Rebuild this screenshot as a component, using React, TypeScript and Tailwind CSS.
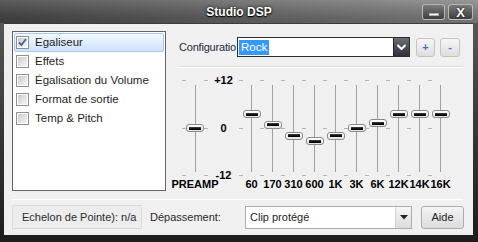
import React from 'react';

const bands = [
  { label: '60', value: 4 },
  { label: '170', value: 1 },
  { label: '310', value: -2.2 },
  { label: '600', value: -3.8 },
  { label: '1K', value: -2.2 },
  { label: '3K', value: 0 },
  { label: '6K', value: 1.4 },
  { label: '12K', value: 4 },
  { label: '14K', value: 4 },
  { label: '16K', value: 4 },
];

const items = ['Egaliseur', 'Effets', 'Égalisation du Volume', 'Format de sortie', 'Temp & Pitch'];

const Checkbox: React.FC<{ checked?: boolean }> = ({ checked }) => (
  <div className="w-[13px] h-[13px] border border-[#8e8f8f] bg-white p-px shrink-0">
    <div className="w-full h-full bg-gradient-to-br from-[#cbcbcb] to-[#f6f6f6] flex items-center justify-center">
      {checked && (
        <svg width="9" height="9" viewBox="0 0 9 9">
          <path d="M1 4.5 L3.5 7 L8 1" stroke="#4a5f97" strokeWidth="1.8" fill="none" />
        </svg>
      )}
    </div>
  </div>
);

const Tick: React.FC<{ pos: 'top' | 'mid' | 'bot'; side: 'left' | 'right' }> = ({ pos, side }) => {
  const y = pos === 'top' ? 'top-[5px]' : pos === 'mid' ? 'top-[53px]' : 'top-[100px]';
  const x = side === 'left' ? '-left-[2px]' : '-right-[2px]';
  return <span className={`absolute ${y} ${x} w-[4px] h-px bg-[#b4b4b4]`} />;
};

const Thumb: React.FC<{ value: number }> = ({ value }) => (
  <div
    className="absolute left-1/2 -translate-x-1/2 w-[18px] h-[8px] rounded-[3px] border border-[#8a8a8a] bg-gradient-to-b from-white to-[#e2e2e2] flex items-center justify-center"
    style={{ top: 39 - value * 3.5 }}
  >
    <div className="w-[12px] h-[3px] bg-gradient-to-b from-[#444] to-[#000]" />
  </div>
);

const Slider: React.FC<{ label: string; value: number; width: string; ticksBoth?: boolean }> = ({ label, value, width, ticksBoth }) => (
  <div className={`relative ${width} flex flex-col`}>
    <Tick pos="top" side="left" />
    <Tick pos="mid" side="left" />
    <Tick pos="bot" side="left" />
    {ticksBoth && (
      <>
        <Tick pos="top" side="right" />
        <Tick pos="mid" side="right" />
        <Tick pos="bot" side="right" />
      </>
    )}
    <div className="h-[10px]" />
    <div className="relative h-[87px] flex justify-center">
      <div className="w-px h-full bg-[#a0a0a0]" />
      <Thumb value={value} />
    </div>
    <div className="h-[6px]" />
    <div className="h-[12px] flex justify-center items-center">
      <span className="whitespace-nowrap text-[11px] font-bold leading-none text-black">{label}</span>
    </div>
  </div>
);

export default function App() {
  return (
    <div className="w-[478px] h-[242px] flex flex-col bg-gradient-to-b from-[#5e5e5e] via-[#3a3a3a] to-[#1d1d1d] font-['Liberation_Sans',Arial,sans-serif] overflow-hidden">
      <div className="relative h-[23px] shrink-0 flex items-center bg-gradient-to-r from-[#4b4b4b] via-[#6d6d6d] to-[#8c8c8c]">
        <div className="absolute inset-0 bg-gradient-to-b from-white/10 to-black/20" />
        <div className="relative flex-1 text-center text-white font-bold text-[12px] [text-shadow:0_0_3px_#000,0_1px_1px_#000]">
          Studio DSP
        </div>
        <div className="absolute right-[5px] top-[4px] flex gap-[3px]">
          <div className="w-[23px] h-[16px] rounded-[3px] border border-[#d0d0d0]/80 bg-gradient-to-b from-[#7c7c7c] to-[#3e3e3e] flex items-end justify-center pb-[3px]">
            <div className="w-[10px] h-[3px] bg-white border border-[#333]/40" />
          </div>
          <div className="w-[25px] h-[16px] rounded-[3px] border border-[#d0d0d0]/80 bg-gradient-to-b from-[#7c7c7c] to-[#3e3e3e] flex items-center justify-center">
            <span className="text-white font-bold text-[13px] leading-none [text-shadow:0_0_2px_#000]">X</span>
          </div>
        </div>
      </div>

      <div className="flex h-[212px] shrink-0 pl-[4px] pr-[5px]">
        <div className="flex-1 bg-[#f0f0f0] border-t border-[#3c3c3c] px-[8px] pt-[7px] flex flex-col text-[#1e1e1e]">
          <div className="flex">
            <div className="w-[154px] h-[160px] border border-[#646464] bg-white p-px shrink-0">
              {items.map((item, i) => (
                <div
                  key={item}
                  className={`h-[19px] flex items-center gap-[6px] pl-px text-[11.5px] ${
                    i === 0 ? 'border border-[#a9c9f0] rounded-[2px] bg-gradient-to-b from-[#f3f9ff] to-[#cde2fa]' : 'border border-transparent'
                  }`}
                >
                  <Checkbox checked={i === 0} />
                  <span>{item}</span>
                </div>
              ))}
            </div>

            <div className="ml-[13px] flex-1 flex flex-col">
              <div className="mt-[6px] h-[20px] flex items-center">
                <span className="w-[58px] shrink-0 text-[11px] tracking-[-0.2px] text-[#1e2a44] whitespace-nowrap">Configuratio</span>
                <div className="w-[173px] h-[20px] border border-[#2d2d2d] bg-white flex">
                  <div className="flex-1 flex items-center pl-px">
                    <span className="bg-[#3399ff] text-white text-[11.5px] px-[2px] leading-[15px]">Rock</span>
                  </div>
                  <div className="w-[16px] h-full bg-gradient-to-b from-[#6a6f78] to-[#2e3138] border-l border-[#222] flex items-center justify-center">
                    <svg width="9" height="6" viewBox="0 0 9 6">
                      <path d="M0.5 1 L4.5 5 L8.5 1" stroke="white" strokeWidth="2" fill="none" />
                    </svg>
                  </div>
                </div>
                <div className="ml-[6px] w-[19px] h-[19px] rounded-[3px] border border-[#c4c4c4] bg-gradient-to-b from-[#f6f6f6] to-[#dedede] flex items-center justify-center text-[11px] font-bold text-[#3e73c0] leading-none">
                  +
                </div>
                <div className="ml-[5px] w-[20px] h-[19px] rounded-[3px] border border-[#c4c4c4] bg-gradient-to-b from-[#f6f6f6] to-[#dedede] flex items-center justify-center text-[11px] font-bold text-[#3e73c0] leading-none">
                  -
                </div>
              </div>
              <div className="mt-[9px] mr-[2px] h-px bg-[#dcdcdc] border-b border-white box-content" />

              <div className="mt-[7px] ml-[5px] flex">
                <Slider label="PREAMP" value={0} width="w-[22px]" ticksBoth />
                <div className="w-[35px] flex flex-col items-center text-[11px] font-bold text-black leading-none">
                  <div className="h-[10px] flex items-center">+12</div>
                  <div className="h-[38px]" />
                  <div className="h-[10px] flex items-center">0</div>
                  <div className="h-[37px]" />
                  <div className="h-[10px] flex items-center">-12</div>
                </div>
                {bands.map((b) => (
                  <Slider key={b.label} label={b.label} value={b.value} width="w-[21px]" />
                ))}
              </div>
            </div>
          </div>

          <div className="mt-[8px] mr-[2px] h-px bg-white" />

          <div className="mt-[5px] h-[24px] flex items-center text-[11px] text-[#2b2b2b]">
            <div className="w-[130px] h-[24px] border border-[#dadada] bg-[#ececec] flex items-center pl-[9px] whitespace-nowrap">
              Echelon de Pointe): n/a
            </div>
            <span className="ml-[8px] w-[95px]">Dépassement:</span>
            <div className="w-[167px] h-[23px] border border-[#acacac] bg-white flex">
              <div className="flex-1 flex items-center pl-[4px] text-[#1e1e1e]">Clip protégé</div>
              <div className="w-[16px] h-full border-l border-[#d0d0d0] bg-gradient-to-b from-[#f6f6f6] to-[#dcdcdc] flex items-center justify-center">
                <svg width="8" height="5" viewBox="0 0 8 5">
                  <path d="M0 0 H8 L4 4.5 Z" fill="#222" />
                </svg>
              </div>
            </div>
            <div className="ml-[9px] w-[43px] h-[23px] rounded-[3px] border border-[#acacac] bg-gradient-to-b from-[#f4f4f4] to-[#dcdcdc] flex items-center justify-center text-[#1e1e1e]">
              Aide
            </div>
          </div>
        </div>
      </div>
    </div>
  );
}
